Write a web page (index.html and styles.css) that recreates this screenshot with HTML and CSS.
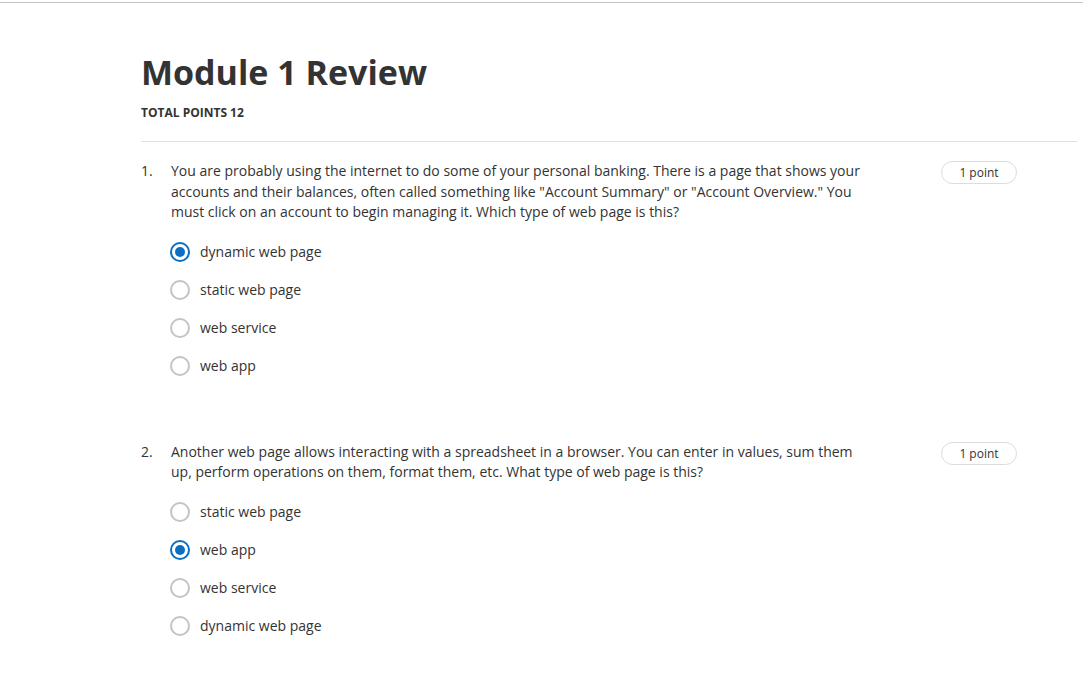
FILE: index.html
```html
<!DOCTYPE html>
<html>
<head>
<meta charset="utf-8">
<link rel="stylesheet" href="styles.css">
</head>
<body>
<div class="topbar"></div>
<main class="page">
  <header class="head">
    <h1 class="title">Module 1 Review</h1>
    <div class="total">TOTAL POINTS 12</div>
  </header>
  <section class="question">
    <div class="num">1.</div>
    <div class="body">
      <p class="prompt">You are probably using the internet to do some of your personal banking. There is a page that shows your accounts and their balances, often called something like "Account Summary" or "Account Overview." You must click on an account to begin managing it. Which type of web page is this?</p>
      <ul class="options">
        <li class="option"><span class="radio checked"></span><span class="label">dynamic web page</span></li>
        <li class="option"><span class="radio"></span><span class="label">static web page</span></li>
        <li class="option"><span class="radio"></span><span class="label">web service</span></li>
        <li class="option"><span class="radio"></span><span class="label">web app</span></li>
      </ul>
    </div>
    <div class="badge">1 point</div>
  </section>
  <section class="question">
    <div class="num">2.</div>
    <div class="body">
      <p class="prompt">Another web page allows interacting with a spreadsheet in a browser. You can enter in values, sum them up, perform operations on them, format them, etc. What type of web page is this?</p>
      <ul class="options">
        <li class="option"><span class="radio"></span><span class="label">static web page</span></li>
        <li class="option"><span class="radio checked"></span><span class="label">web app</span></li>
        <li class="option"><span class="radio"></span><span class="label">web service</span></li>
        <li class="option"><span class="radio"></span><span class="label">dynamic web page</span></li>
      </ul>
    </div>
    <div class="badge">1 point</div>
  </section>
</main>
</body>
</html>
```
FILE: styles.css
```css
html, body {
  margin: 0;
  padding: 0;
  background: #fff;
}
body {
  font-family: "Open Sans", "Liberation Sans", sans-serif;
  color: #333;
}
.topbar {
  margin-top: 2px;
  height: 1px;
  background: #c4c4c4;
}
.page {
  padding: 0 6px 0 141px;
}
.head {
  padding-top: 46px;
  padding-bottom: 20px;
  border-bottom: 1px solid #e0e0e0;
}
.title {
  margin: 0;
  font-size: 34px;
  line-height: 46px;
  font-weight: 700;
  color: #333;
}
.total {
  margin-top: 10px;
  font-size: 12px;
  line-height: 16px;
  font-weight: 700;
  color: #333;
}
.question {
  display: flex;
  align-items: flex-start;
  padding-top: 19px;
  padding-bottom: 38px;
}
.num {
  width: 30px;
  flex: none;
  font-size: 14px;
  line-height: 20.5px;
}
.body {
  width: 700px;
  flex: none;
}
.prompt {
  margin: 0;
  font-size: 14px;
  line-height: 20.5px;
}
.options {
  list-style: none;
  margin: 10px 0 0;
  padding: 0;
}
.option {
  display: flex;
  align-items: center;
  height: 38px;
}
.radio {
  box-sizing: border-box;
  width: 20px;
  height: 20px;
  border: 2px solid #c4c4c4;
  border-radius: 50%;
  flex: none;
  margin-left: -1px;
  position: relative;
}
.radio.checked {
  border-color: #0a6fc2;
}
.radio.checked::after {
  content: "";
  position: absolute;
  left: 3px;
  top: 3px;
  width: 10px;
  height: 10px;
  border-radius: 50%;
  background: #0a6fc2;
}
.label {
  margin-left: 10px;
  font-size: 14px;
  color: #333;
}
.badge {
  margin-left: auto;
  margin-right: 60px;
  margin-top: 0;
  box-sizing: border-box;
  width: 76px;
  height: 23px;
  border: 1px solid #dcdcdc;
  border-radius: 12px;
  font-size: 12px;
  line-height: 21px;
  text-align: center;
  color: #333;
}
```
